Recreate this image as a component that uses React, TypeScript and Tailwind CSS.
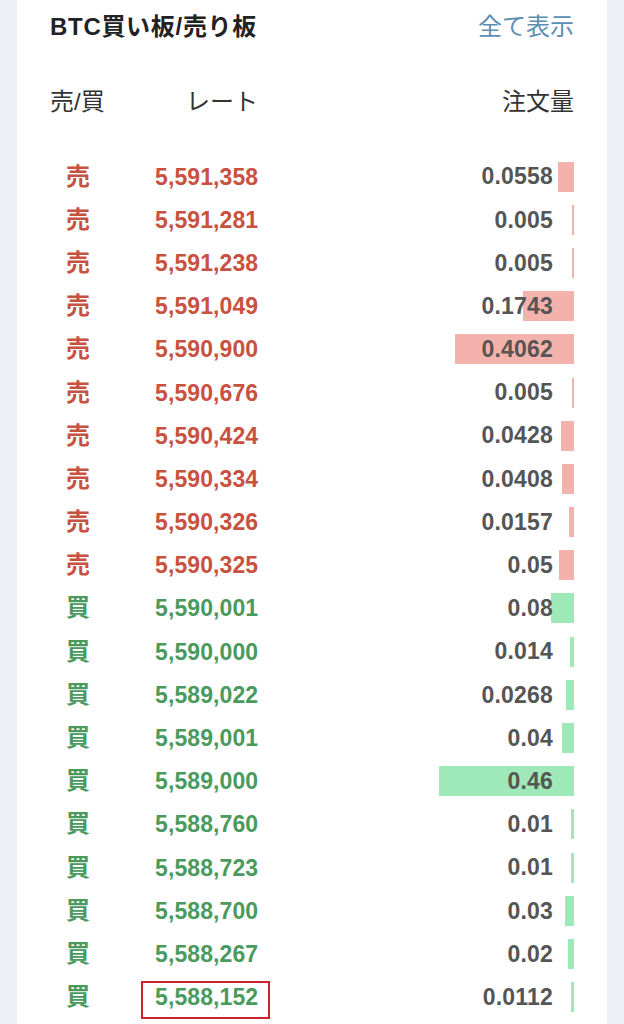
import React from "react";

type Row = { side: "sell" | "buy"; price: string; qty: string };

const rows: Row[] = [
  { side: "sell", price: "5,591,358", qty: "0.0558" },
  { side: "sell", price: "5,591,281", qty: "0.005" },
  { side: "sell", price: "5,591,238", qty: "0.005" },
  { side: "sell", price: "5,591,049", qty: "0.1743" },
  { side: "sell", price: "5,590,900", qty: "0.4062" },
  { side: "sell", price: "5,590,676", qty: "0.005" },
  { side: "sell", price: "5,590,424", qty: "0.0428" },
  { side: "sell", price: "5,590,334", qty: "0.0408" },
  { side: "sell", price: "5,590,326", qty: "0.0157" },
  { side: "sell", price: "5,590,325", qty: "0.05" },
  { side: "buy", price: "5,590,001", qty: "0.08" },
  { side: "buy", price: "5,590,000", qty: "0.014" },
  { side: "buy", price: "5,589,022", qty: "0.0268" },
  { side: "buy", price: "5,589,001", qty: "0.04" },
  { side: "buy", price: "5,589,000", qty: "0.46" },
  { side: "buy", price: "5,588,760", qty: "0.01" },
  { side: "buy", price: "5,588,723", qty: "0.01" },
  { side: "buy", price: "5,588,700", qty: "0.03" },
  { side: "buy", price: "5,588,267", qty: "0.02" },
  { side: "buy", price: "5,588,152", qty: "0.0112" },
];

const FONT = { fontFamily: '"Liberation Sans", "Noto Sans CJK JP", sans-serif' };

export default function App() {
  return (
    <div className="min-h-[1024px] w-[624px] bg-[#eff0f5] overflow-hidden" style={FONT}>
      <div className="ml-[17px] w-[590px] min-h-[1024px] bg-white px-[33px]">
        <div className="flex h-[54px] items-center justify-between">
          <div className="text-[24px] font-bold text-[#222] tracking-[0.7px]">BTC買い板/売り板</div>
          <div className="text-[24px] text-[#5b8eb2]">全て表示</div>
        </div>
        <div className="flex h-[96px] items-center text-[24px] text-[#333]">
          <div className="w-[136px]">売/買</div>
          <div>レート</div>
          <div className="ml-auto">注文量</div>
        </div>
        <div className="pt-[5px]">
          {rows.map((r, i) => {
            const sell = r.side === "sell";
            const w = Math.max(2, parseFloat(r.qty) * 293);
            const last = i === rows.length - 1;
            return (
              <div key={i} className="flex h-[43.2px] items-center">
                <div
                  className={`w-[56px] text-center text-[24px] font-bold ${
                    sell ? "text-[#c8513f]" : "text-[#4a9a5e]"
                  }`}
                >
                  {sell ? "売" : "買"}
                </div>
                <div className="ml-[49px] relative">
                  <span
                    className={`block leading-[28px] text-[23px] font-bold tracking-[0.1px] ${
                      sell ? "text-[#c8513f]" : "text-[#4a9a5e]"
                    }`}
                  >
                    {r.price}
                  </span>
                  {last && (
                    <div className="absolute -left-[14px] -right-[12px] -top-[2px] -bottom-[8px] border-2 border-[#d0232e]" />
                  )}
                </div>
                <div className="ml-auto relative flex h-[30px] items-center pr-[21px]">
                  <div
                    className={`absolute right-0 top-0 h-[30px] ${sell ? "bg-[#f4b2ac]" : "bg-[#9fe8b7]"}`}
                    style={{ width: `${w}px` }}
                  />
                  <span className="relative text-[23px] font-bold text-[#555] tracking-[0.2px]">{r.qty}</span>
                </div>
              </div>
            );
          })}
        </div>
      </div>
    </div>
  );
}
